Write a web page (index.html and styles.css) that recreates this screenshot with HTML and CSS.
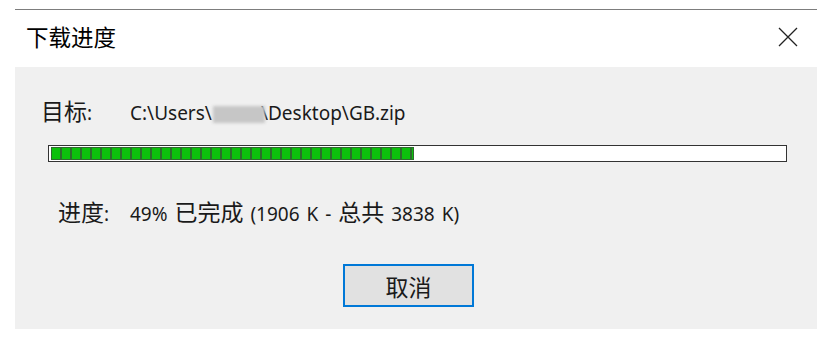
FILE: index.html
```html
<!DOCTYPE html>
<html lang="zh-CN">
<head>
<meta charset="utf-8">
<title>下载进度</title>
<link rel="stylesheet" href="styles.css">
</head>
<body>
<div class="window">
  <div class="titlebar">
    <span class="title cjk">下载进度</span>
    <svg class="close" width="20" height="20" viewBox="0 0 20 20" aria-label="关闭">
      <path d="M1 1 L19 19 M19 1 L1 19" stroke="#222" stroke-width="1.3" fill="none"/>
    </svg>
  </div>
  <div class="panel">
    <div class="row target">
      <span class="label"><span class="cjk">目标</span>:</span><span class="path">C:\Users\<span class="redact"></span>\Desktop\GB.zip</span>
    </div>
    <div class="bar"><div class="fill" style="width:363px"></div></div>
    <div class="row status">
      <span class="label2"><span class="cjk">进度</span>:</span><span class="info">49% <span class="cjk">已完成</span> (1906 K - <span class="cjk">总共</span> 3838 K)</span>
    </div>
    <div class="actions">
      <button class="btn"><span class="cjk">取消</span></button>
    </div>
  </div>
</div>
</body>
</html>
```

FILE: styles.css
```css
html, body {
  margin: 0;
  padding: 0;
  background: #ffffff;
}
body {
  font-family: "Noto Sans", "Noto Sans CJK SC", sans-serif;
  font-size: 19px;
  color: #1a1a1a;
  padding-top: 9px;
}
.cjk {
  font-family: "Noto Sans CJK SC", sans-serif;
  font-size: 23px;
}
.window {
  margin-left: 15px;
  width: 802px;
  border-top: 1px solid #7d7d7d;
}
.titlebar {
  height: 57px;
  display: flex;
  align-items: center;
  justify-content: space-between;
  padding: 0 19px 0 11px;
  box-sizing: border-box;
}
.title {
  color: #000;
  font-size: 22.5px;
  line-height: 24px;
  margin-top: -5px;
}
.close {
  display: block;
  margin-top: -4px;
}
.panel {
  background: #f0f0f0;
  height: 262px;
  box-sizing: border-box;
  padding-top: 31px;
  display: flex;
  flex-direction: column;
}
.row {
  height: 24px;
  line-height: 24px;
  white-space: nowrap;
}
.target {
  padding-left: 26px;
}
.label {
  display: inline-block;
  width: 89px;
}
.label2 {
  display: inline-block;
  width: 72px;
}
.info {
  word-spacing: 2px;
}
.redact {
  display: inline-block;
  vertical-align: -3px;
  width: 52px;
  height: 17px;
  background: #c6c6c6;
  filter: blur(1.5px);
  margin: 0 -4px 0 1px;
}
.bar {
  margin: 23px 0 0 33px;
  width: 739px;
  height: 17px;
  box-sizing: border-box;
  border: 1px solid #333;
  background: #fff;
  padding: 1px 1px 1px 2px;
}
.fill {
  height: 100%;
  box-sizing: border-box;
  border: 1px solid #2e6a2e;
  background: repeating-linear-gradient(90deg, #0cc10c 0 8px, #2e6a2e 8px 10px);
}
.status {
  margin-top: 37px;
  padding-left: 43px;
}
.actions {
  margin-top: 41px;
  padding-left: 328px;
}
.btn {
  width: 131px;
  height: 43px;
  box-sizing: border-box;
  border: 2px solid #0078d7;
  background: #e1e1e1;
  color: #1a1a1a;
  padding: 0;
  display: flex;
  align-items: center;
  justify-content: center;
  font-family: "Noto Sans CJK SC", sans-serif;
}
```
